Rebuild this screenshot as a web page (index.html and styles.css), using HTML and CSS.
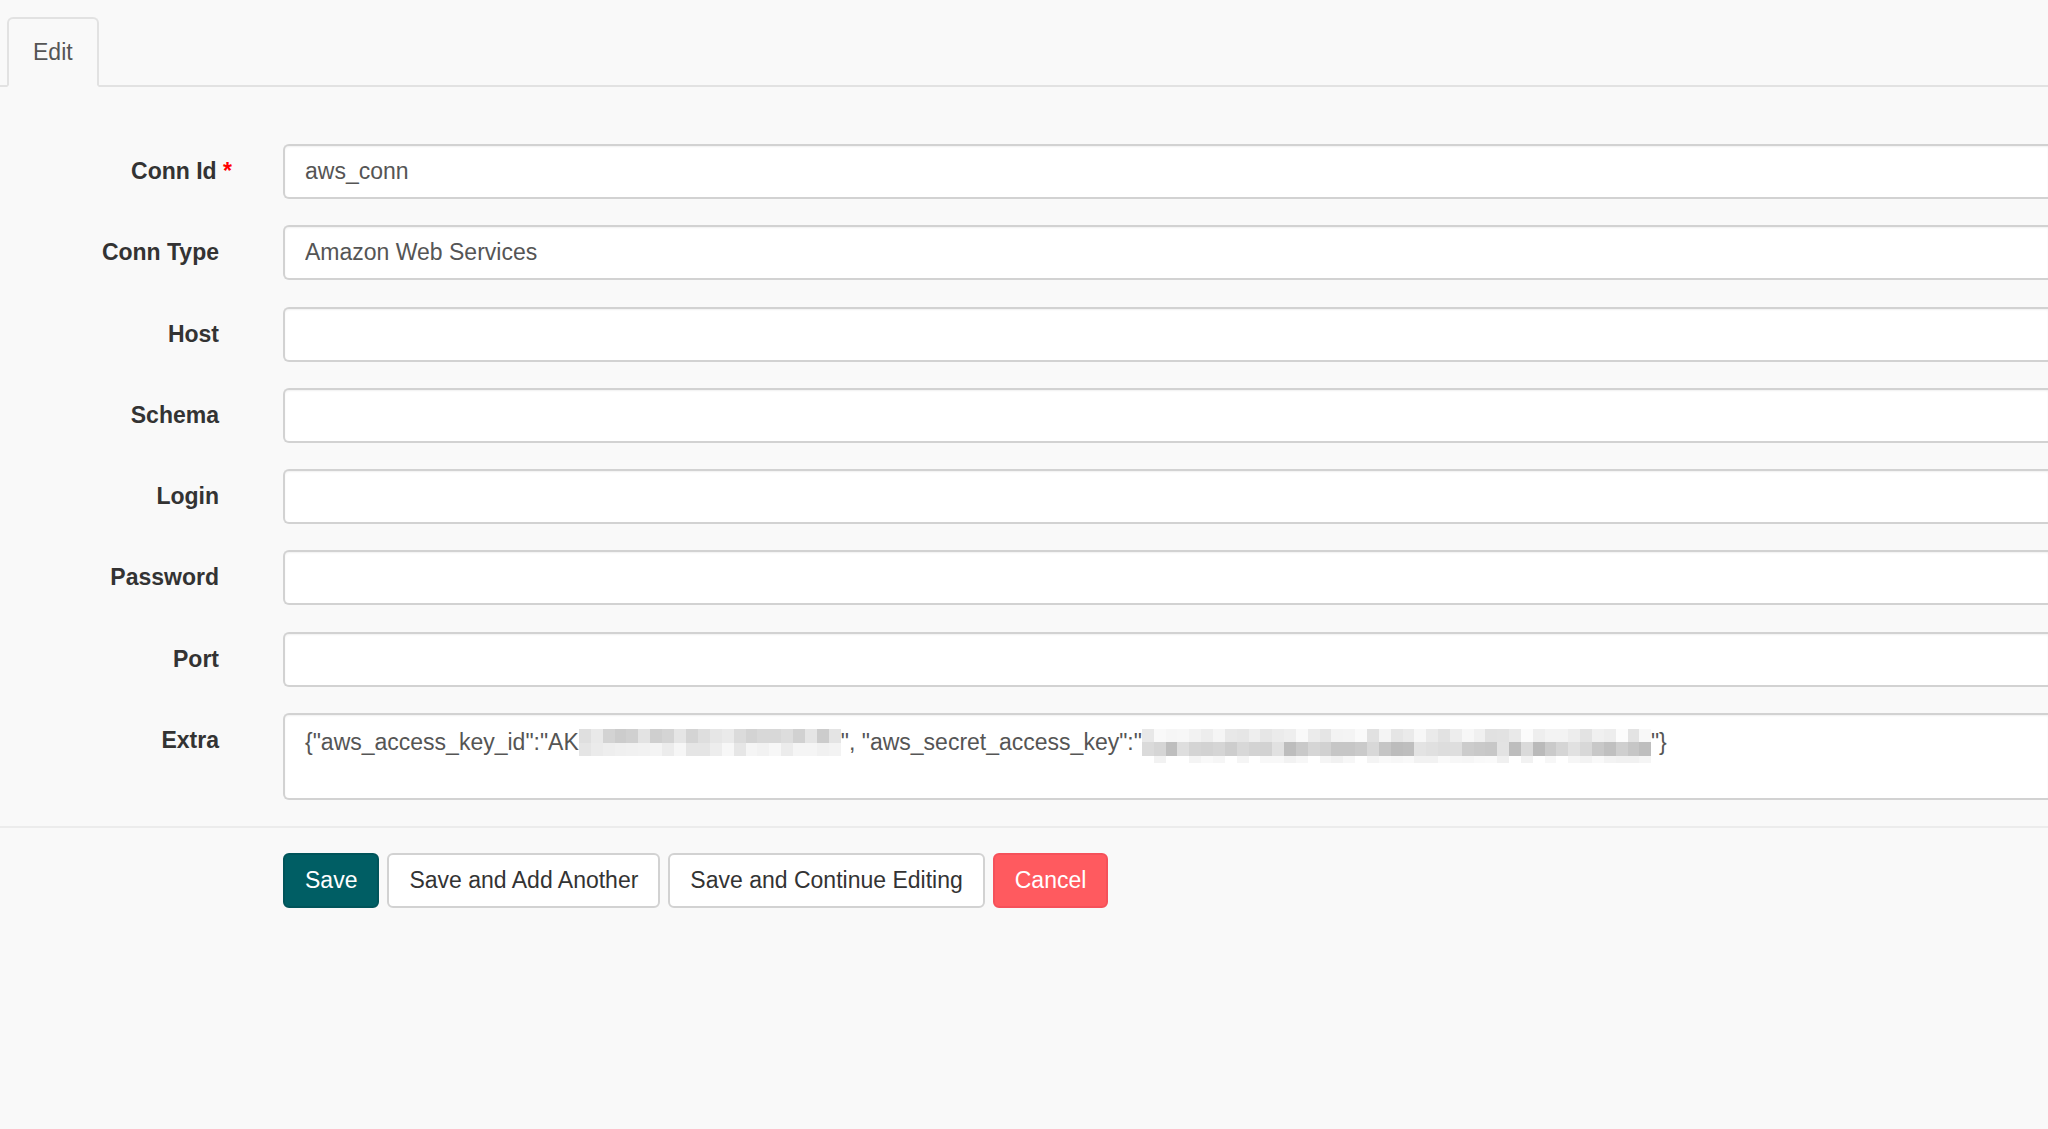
FILE: index.html
```html
<!DOCTYPE html>
<html>
<head>
<meta charset="UTF-8">
<title>Edit Connection</title>
<link rel="stylesheet" href="styles.css">
</head>
<body>
<div class="tabs">
	<div class="tab">Edit</div>
</div>

<form class="edit-form">
	<div class="form-group">
		<label class="form-label">Conn Id <span class="req">*</span></label>
		<div class="form-field"><input type="text" class="form-control" value="aws_conn"></div>
	</div>
	<div class="form-group">
		<label class="form-label">Conn Type</label>
		<div class="form-field"><input type="text" class="form-control" value="Amazon Web Services"></div>
	</div>
	<div class="form-group">
		<label class="form-label">Host</label>
		<div class="form-field"><input type="text" class="form-control"></div>
	</div>
	<div class="form-group">
		<label class="form-label">Schema</label>
		<div class="form-field"><input type="text" class="form-control"></div>
	</div>
	<div class="form-group">
		<label class="form-label">Login</label>
		<div class="form-field"><input type="text" class="form-control"></div>
	</div>
	<div class="form-group">
		<label class="form-label">Password</label>
		<div class="form-field"><input type="password" class="form-control"></div>
	</div>
	<div class="form-group">
		<label class="form-label">Port</label>
		<div class="form-field"><input type="text" class="form-control"></div>
	</div>
	<div class="form-group form-group-extra">
		<label class="form-label label-top">Extra</label>
		<div class="form-field">
			<div class="form-control textarea">{"aws_access_key_id":"AK<span class="mosaic mosaic-key" id="blurKey"></span>", "aws_secret_access_key":"<span class="mosaic mosaic-secret" id="blurSecret"></span>"}</div>
		</div>
	</div>

	<div class="form-actions">
		<button type="button" class="btn btn-primary">Save</button>
		<button type="button" class="btn btn-default">Save and Add Another</button>
		<button type="button" class="btn btn-default">Save and Continue Editing</button>
		<button type="button" class="btn btn-danger">Cancel</button>
	</div>
</form>

<script type="text/javascript">
	// 가려진 키 값 모자이크 채우기
	var seed = 11;
	function rnd()
	{
		seed = (seed * 9301 + 49297) % 233280;
		return seed / 233280;
	}

	function mosaic(id, cols, rows)
	{
		var box = document.getElementById(id);
		for (var r = 0; r < rows.length; r++)
		{
			var row = document.createElement("span");
			row.className = "mrow";
			row.style.height = rows[r][2] + "px";
			for (var c = 0; c < cols; c++)
			{
				var cell = document.createElement("span");
				cell.className = "mcell";
				var g = Math.round(rows[r][0] + rnd() * (rows[r][1] - rows[r][0]));
				if (rows[r][3] && rnd() > rows[r][3])
					g = 255;
				cell.style.background = "rgb(" + g + "," + g + "," + g + ")";
				row.appendChild(cell);
			}
			box.appendChild(row);
		}
	}

	mosaic("blurKey", 22, [[200, 236, 14], [228, 250, 13]]);
	mosaic("blurSecret", 43, [[224, 252, 13], [186, 228, 14], [240, 250, 7, 0.75]]);
</script>
</body>
</html>
```

FILE: styles.css
```css
body
{
	margin: 0;
	background-color: #f9f9f9;
	font-family: "Liberation Sans", Arial, Helvetica, sans-serif;
	font-size: 23px;
	color: #333333;
	overflow: hidden;
}

/* 탭 */
.tabs
{
	display: flex;
	padding: 17px 0 0 7px;
	border-bottom: 2px solid #e2e2e2;
}
.tab
{
	height: 66px;
	line-height: 66px;
	padding: 0 24px;
	margin-bottom: -2px;
	border: 2px solid #e2e2e2;
	border-bottom-color: #f9f9f9;
	border-radius: 6px 6px 0 0;
	background-color: #f9f9f9;
	color: #555555;
}

/* 폼 */
.edit-form
{
	padding-top: 57px;
}
.form-group
{
	display: flex;
	align-items: flex-start;
	gap: 64px;
	margin-bottom: 26.3px;
}
.form-label
{
	flex: 0 0 219px;
	text-align: right;
	font-weight: bold;
	line-height: 55px;
	white-space: nowrap;
}
.label-top
{
	line-height: 33px;
	padding-top: 11px;
}
.req
{
	color: #ff0000;
	margin-right: -13px;
}
.form-field
{
	flex: 1;
	min-width: 0;
}
.form-control
{
	display: block;
	box-sizing: border-box;
	width: 100%;
	height: 55px;
	padding: 0 20px;
	border: 2px solid #d2d2d2;
	border-right-width: 0;
	border-radius: 6px 0 0 6px;
	background-color: #ffffff;
	box-shadow: inset 0 1px 2px rgba(0, 0, 0, 0.06);
	font-family: inherit;
	font-size: 23px;
	color: #555555;
	outline: none;
}
.textarea
{
	height: 87px;
	padding-top: 11px;
	line-height: 33px;
	white-space: nowrap;
	overflow: hidden;
}

/* 모자이크 */
.mosaic
{
	display: inline-block;
	overflow: hidden;
}
.mosaic-key
{
	width: 262px;
	height: 27px;
	vertical-align: -6px;
}
.mosaic-secret
{
	width: 509px;
	height: 34px;
	vertical-align: -13px;
}
.mrow
{
	display: flex;
}
.mcell
{
	flex: 1;
}

/* 버튼 */
.form-actions
{
	display: flex;
	gap: 8px;
	padding: 25px 0 0 283px;
	border-top: 2px solid #ececec;
}
.btn
{
	box-sizing: border-box;
	height: 55px;
	padding: 0 20px;
	border: 2px solid #d2d2d2;
	border-radius: 6px;
	font-family: inherit;
	font-size: 23px;
	cursor: pointer;
}
.btn-primary
{
	background-color: #005e64;
	border-color: #00545a;
	color: #ffffff;
}
.btn-default
{
	background-color: #ffffff;
	color: #333333;
}
.btn-danger
{
	background-color: #ff5a5f;
	border-color: #f5515a;
	color: #ffffff;
}
```
